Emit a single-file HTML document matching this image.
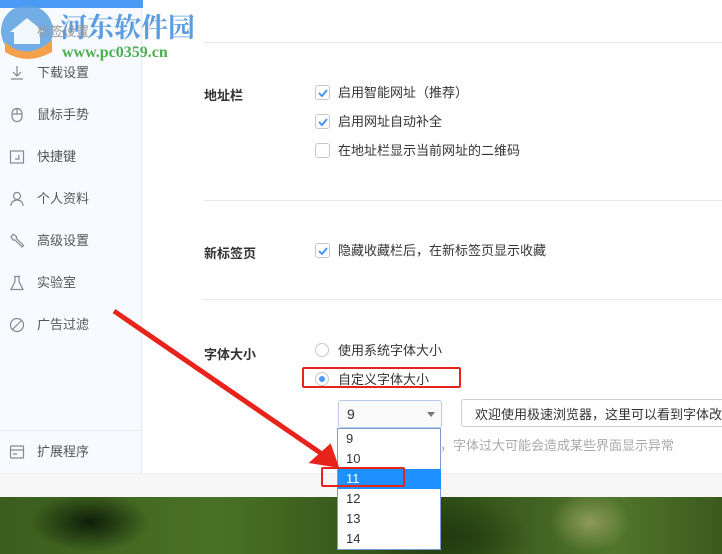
<!DOCTYPE html>
<html><head><meta charset="utf-8"><style>
*{margin:0;padding:0;box-sizing:border-box}
body{width:722px;height:554px;overflow:hidden;position:relative;background:#fff;font-family:"Liberation Sans","Noto Sans CJK SC",sans-serif;font-size:13px;color:#333}
.abs{position:absolute}
.side{left:0;top:0;width:142px;height:473px;background:#f7faff;border-right:1px solid #e6e9ee}
.topbar{left:0;top:0;width:143px;height:8px;background:#4a9bf5}
.item{position:absolute;left:37px;color:#555;font-size:13px;line-height:16px}
.ic{position:absolute;left:9px;width:16px;height:16px}
.hr{position:absolute;left:204px;right:0;height:1px;background:#e8e8e8}
.lbl{position:absolute;left:204px;font-weight:bold;color:#333;font-size:13px}
.cb{position:absolute;left:315px;width:15px;height:15px;border:1px solid #c8c8c8;border-radius:3px;background:#fff}
.cb svg{position:absolute;left:1px;top:1px}
.txt{position:absolute;left:338px;color:#333;font-size:13px;line-height:16px}
.rad{position:absolute;left:315px;width:14px;height:14px;border:1px solid #c8c8c8;border-radius:50%;background:#fff}
.opt{position:absolute;left:0;width:103px;height:20px;padding-left:8px;line-height:20px;font-size:13px;color:#333}
</style></head><body>
<div class="abs side"></div>
<div class="abs topbar"></div>
<div class="abs" style="left:0;top:430px;width:142px;height:1px;background:#e6e9ee"></div>

<svg class="abs" style="left:0;top:4px" width="60" height="58"><circle cx="27" cy="27" r="26" fill="#5aa0e0" opacity=".85"/><path d="M5 38 Q27 58 52 36 L52 48 Q27 62 5 48Z" fill="#f5a04a"/><path d="M10 28 L27 14 L44 28 L40 28 L40 40 L14 40 L14 28Z" fill="#fff" opacity=".9"/></svg>
<div class="abs" style="left:60px;top:6px;font-size:27px;font-weight:bold;color:#4b93dd;font-family:'Noto Serif CJK SC',serif;opacity:.9">河东软件园</div>
<div class="abs" style="left:62px;top:44px;font-size:16px;font-weight:bold;color:#4caf50;font-family:'Liberation Serif',serif">www.pc0359.cn</div>
<div class="item" style="top:24px;color:#999">标签设置</div>

<svg class="ic" style="top:65px" viewBox="0 0 16 16" fill="none" stroke="#888" stroke-width="1.2"><path d="M8 1v10M4 7l4 4 4-4M2 14h12"/></svg>
<div class="item" style="top:65px">下载设置</div>
<svg class="ic" style="top:107px" viewBox="0 0 16 16" fill="none" stroke="#888" stroke-width="1.2"><rect x="3" y="1.5" width="10" height="13" rx="5"/><path d="M3 7h10M8 1.5v5.5"/></svg>
<div class="item" style="top:107px">鼠标手势</div>
<svg class="ic" style="top:149px" viewBox="0 0 16 16" fill="none" stroke="#888" stroke-width="1.2"><rect x="1.5" y="2" width="13" height="12"/><path d="M10 6v4H6"/></svg>
<div class="item" style="top:149px">快捷键</div>
<svg class="ic" style="top:191px" viewBox="0 0 16 16" fill="none" stroke="#888" stroke-width="1.2"><circle cx="8" cy="5" r="3.5"/><path d="M2 15c0-4 3-6 6-6s6 2 6 6"/></svg>
<div class="item" style="top:191px">个人资料</div>
<svg class="ic" style="top:233px" viewBox="0 0 16 16" fill="none" stroke="#888" stroke-width="1.2"><path d="M4 1.5L2 4l2 3 2 0 7 7 1.5-1.5-7-7 0-2-3-2z"/></svg>
<div class="item" style="top:233px">高级设置</div>
<svg class="ic" style="top:275px" viewBox="0 0 16 16" fill="none" stroke="#888" stroke-width="1.2"><path d="M5 1.5h6M6 1.5v5L2 14.5h12L10 6.5v-5"/></svg>
<div class="item" style="top:275px">实验室</div>
<svg class="ic" style="top:317px" viewBox="0 0 16 16" fill="none" stroke="#888" stroke-width="1.2"><circle cx="8" cy="8" r="6.5"/><path d="M3.5 12.5l9-9"/></svg>
<div class="item" style="top:317px">广告过滤</div>
<svg class="ic" style="top:444px" viewBox="0 0 16 16" fill="none" stroke="#888" stroke-width="1.2"><rect x="1.5" y="2" width="13" height="12" rx="1"/><path d="M1.5 6h13M4 10h4"/></svg>
<div class="item" style="top:444px">扩展程序</div>

<div class="hr" style="top:42px"></div>
<div class="hr" style="top:200px"></div>
<div class="hr" style="top:299px"></div>

<div class="lbl" style="top:85px">地址栏</div>
<div class="cb" style="top:85px"><svg width="12" height="12"><path d="M2 6l3 3 5-6" stroke="#3d8ff5" stroke-width="1.8" fill="none"/></svg></div>
<div class="txt" style="top:85px">启用智能网址（推荐）</div>
<div class="cb" style="top:114px"><svg width="12" height="12"><path d="M2 6l3 3 5-6" stroke="#3d8ff5" stroke-width="1.8" fill="none"/></svg></div>
<div class="txt" style="top:114px">启用网址自动补全</div>
<div class="cb" style="top:143px"></div>
<div class="txt" style="top:143px">在地址栏显示当前网址的二维码</div>

<div class="lbl" style="top:243px">新标签页</div>
<div class="cb" style="top:243px"><svg width="12" height="12"><path d="M2 6l3 3 5-6" stroke="#3d8ff5" stroke-width="1.8" fill="none"/></svg></div>
<div class="txt" style="top:243px">隐藏收藏栏后，在新标签页显示收藏</div>

<div class="lbl" style="top:344px">字体大小</div>
<div class="rad" style="top:343px"></div>
<div class="txt" style="top:343px">使用系统字体大小</div>
<div class="rad" style="top:372px"><div style="position:absolute;left:3px;top:3px;width:6px;height:6px;border-radius:50%;background:#4a9bf5"></div></div>
<div class="txt" style="top:372px">自定义字体大小</div>
<div class="abs" style="left:302px;top:367px;width:159px;height:21px;border:2px solid #e8231b;border-radius:2px"></div>

<div class="abs" style="left:338px;top:400px;width:104px;height:28px;border:1px solid #b9cbe8;border-radius:3px;background:#fafafa"><span style="position:absolute;left:8px;top:5px;font-size:14px">9</span><span style="position:absolute;right:6px;top:11px;border:4px solid transparent;border-top:5px solid #777"></span></div>
<div class="abs" style="left:461px;top:399px;width:270px;height:28px;border:1px solid #ccc;border-radius:3px;padding:4px 0 0 13px;font-size:13px;white-space:nowrap;overflow:hidden">欢迎使用极速浏览器，这里可以看到字体改变的效果</div>
<div class="abs" style="left:440px;top:435px;font-size:13px;color:#aaa">，字体过大可能会造成某些界面显示异常</div>

<div class="abs" style="left:0;top:473px;width:722px;height:24px;background:#f7f7f7;border-top:1px solid #eee"></div>
<div class="abs" style="left:0;top:497px;width:722px;height:57px;background:radial-gradient(ellipse 60px 30px at 90px 25px,#0f1e08,transparent),radial-gradient(ellipse 40px 30px at 590px 25px,#8d9a5a,transparent),radial-gradient(ellipse 80px 40px at 450px 40px,#223a10,transparent),linear-gradient(90deg,#3a5d1c,#4a7226 30%,#2c4a14 60%,#51762c 85%,#3b5a1c)"></div>

<div class="abs" style="left:337px;top:428px;width:104px;height:122px;border:1px solid #7a9cd3;background:#fff">
<div class="opt" style="top:0">9</div>
<div class="opt" style="top:20px">10</div>
<div class="opt" style="top:40px;background:#1e90ff;color:#fff">11</div>
<div class="opt" style="top:60px">12</div>
<div class="opt" style="top:80px">13</div>
<div class="opt" style="top:100px">14</div>
</div>
<div class="abs" style="left:321px;top:467px;width:84px;height:20px;border:2px solid #e8231b;border-radius:2px"></div>

<svg class="abs" style="left:0;top:0" width="722" height="554"><path d="M114 311 L322 454" stroke="#e8231b" stroke-width="5"/><path d="M337 466 L312 462 L330 446Z" fill="#e8231b" stroke="#e8231b" stroke-width="3"/></svg>
</body></html>
